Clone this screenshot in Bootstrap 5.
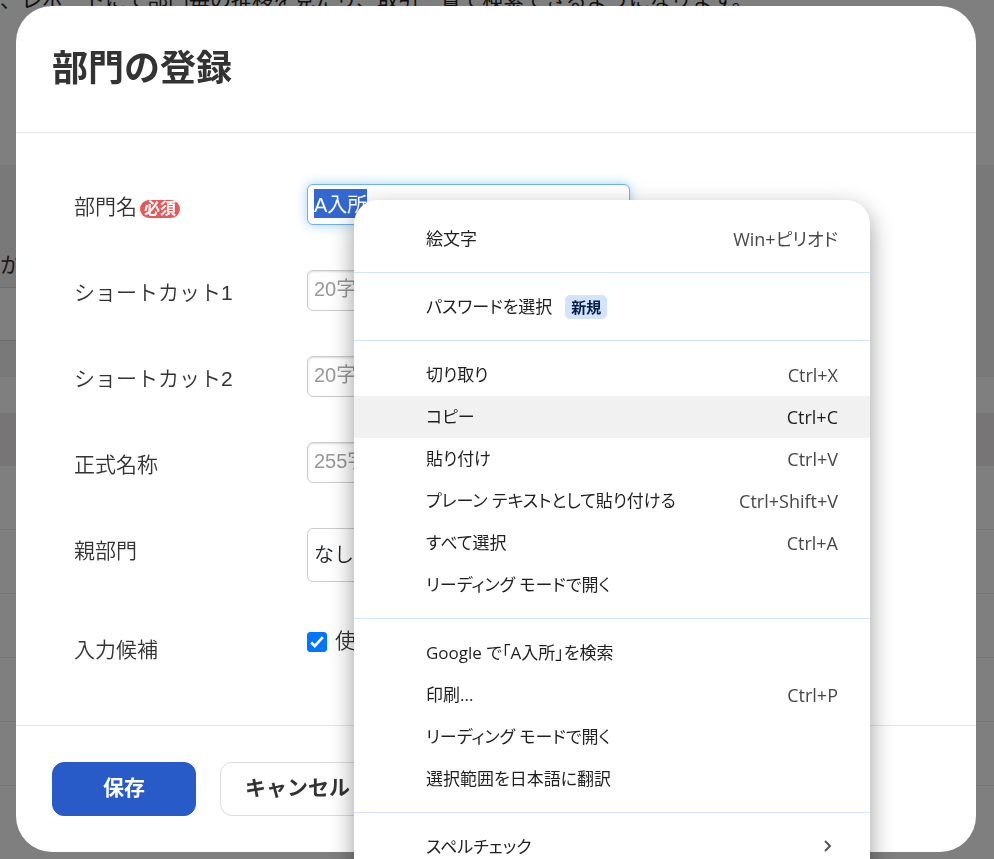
<!DOCTYPE html>
<html lang="ja">
<head>
<meta charset="utf-8">
<meta name="viewport" content="width=device-width, initial-scale=1">
<title>部門の登録</title>
<link href="https://cdn.jsdelivr.net/npm/bootstrap@5.3.0/dist/css/bootstrap.min.css" rel="stylesheet">
<style>
  body { font-family: "Liberation Sans", "Noto Sans CJK JP", sans-serif; font-size: 21px; line-height: 32px; color: #333; }
  .page-intro { height: 165px; }
  .page-intro p { margin: -16px 0 0; line-height: 32px; color: #222; }
  .list-line { height: 64px; border-bottom: 1px solid #eaeaea; }
  .list-head { height: 123px; background: #f2f2f2; border-bottom: 1px solid #dadada; padding-top: 84px; }
  .list-filter { height: 53px; border-bottom: 1px solid #dadada; }
  .list-band { height: 36px; background: #f2f2f2; }
  .list-gap { height: 36px; }
  .list-accent { height: 53px; background: #f1eaec; }
  .list-side { width: 18px; height: 212px; background: #f2f2f2; }
  .entry-dialog { max-width: none; margin: 6px 18px 7px 16px; }
  .entry-dialog .modal-content { border: 0; border-radius: 36px; color: #333; }
  .entry-dialog .modal-header { height: 127px; padding: 0 36px; border-color: #e5e5e5; }
  .entry-dialog .modal-title { font-size: 36px; line-height: 44px; font-weight: 700; }
  .entry-dialog .modal-body { padding: 51px 58px 52px; }
  .entry-dialog .modal-footer { padding: 36px; gap: 24px; border-color: #e5e5e5; }
  .entry-form { gap: 45px; }
  .entry-label { flex: 0 0 233px; font-weight: 350; line-height: 46px; margin: 0; }
  .entry-row { height: 41px; }
  .entry-row .entry-label { padding-top: 4px; }
  .entry-row-tall { height: 54px; }
  .required-tag { font-size: 16px; line-height: 18px; padding: 0 4px; margin-left: 3px; border-radius: 9px; background: #e85858; color: #fff; font-weight: 700; vertical-align: 0; }
  .entry-field { width: 323px; height: 41px; padding: 0 6px 3px; font-size: 20px; border: 1px solid #ccc; border-radius: 6px; box-shadow: inset 0 1px 2px #0002; color: #333; }
  .entry-field::placeholder { color: #999; }
  .entry-field:focus { border-color: #6db3ee; box-shadow: 0 0 12px #78bef0b0; }
  .entry-field::selection { background: rgba(51, 103, 209, .996); color: #fff; }
  .entry-select { width: 323px; height: 54px; padding: 0 6px; font-size: 20px; font-weight: 350; border: 1px solid #ccc; border-radius: 6px; background-color: #fff; }
  .entry-check { width: 20px; height: 20px; margin: 0; }
  .entry-check[type=checkbox] { border-radius: 3px; }
  .entry-check:checked { background-color: #0075ff; border-color: #0075ff; background-image: url("data:image/svg+xml,%3csvg xmlns='http://www.w3.org/2000/svg' viewBox='0 0 20 20'%3e%3cpath fill='none' stroke='%23fff' stroke-width='3' d='M3.5 10.5l4 4 9-10'/%3e%3c/svg%3e") !important; }
  .entry-check-label { font-weight: 350; line-height: 28px; padding-bottom: 2px; }
  .suggest-box { padding-bottom: 16px; }
  .entry-btn { height: 54px; font-size: 21px; font-weight: 700; border-radius: 12px; padding: 0 24px 3px; }
  .entry-save { width: 144px; --bs-btn-bg: #285ac8; --bs-btn-border-color: #285ac8; --bs-btn-color: #fff; }
  .entry-cancel { --bs-btn-bg: #fff; --bs-btn-border-color: #dcdcdc; --bs-btn-color: #333; }
  .context-menu { top: 200px; left: 354px; width: 516px; height: 700px; z-index: 1060; padding-top: 18px; background: #fff; border-radius: 24px; box-shadow: 0 9px 24px #0006; font-family: "Open Sans", "Noto Sans CJK JP", sans-serif; font-size: 17px; }
  .menu-entry { height: 42px; width: 100%; padding: 0 32px 0 72px; border: 0; background: none; color: #1f1f1f; font-feature-settings: "palt"; }
  .menu-entry.current { background: #f1f1f1; }
  .menu-keys { color: #474747; font-size: 18px; }
  .current .menu-keys { color: #1f1f1f; }
  .menu-line { height: 1px; margin: 12px 0 13px; background: #d3e3fd; }
  .new-tag { width: 42px; height: 24px; margin-left: 13px; border-radius: 5px; background: #d3e3fd; color: #041e49; font-size: 15px; line-height: 24px; font-weight: 700; text-align: center; }
</style>
</head>
<body class="vh-100 overflow-hidden">
<main class="position-relative">
  <div class="page-intro text-nowrap overflow-hidden"><p>、レポートにて部門毎の推移を見たり、取引一覧で検索できるようになります。</p></div>
  <div class="d-flex">
    <div class="flex-grow-1">
      <div class="list-head">か</div>
      <div class="list-filter"></div>
      <div class="list-band"></div>
    </div>
    <div class="list-side"></div>
  </div>
  <div class="list-gap"></div>
  <div class="list-accent"></div>
  <div class="list-line"></div>
  <div class="list-line"></div>
  <div class="list-line"></div>
  <div class="list-line"></div>
  <div class="list-line"></div>
</main>
<div class="modal-backdrop show"></div>
<div class="modal d-block overflow-hidden" role="dialog" aria-labelledby="dialogTitle">
  <div class="modal-dialog entry-dialog">
    <div class="modal-content">
      <div class="modal-header"><h1 class="modal-title" id="dialogTitle">部門の登録</h1></div>
      <form class="modal-body entry-form d-flex flex-column" id="entryForm">
        <div class="entry-row d-flex align-items-center">
          <label class="entry-label" for="deptName">部門名<span class="required-tag d-inline-block">必須</span></label>
          <input class="entry-field form-control" id="deptName" type="text" value="A入所" autofocus>
        </div>
        <div class="entry-row d-flex align-items-center">
          <label class="entry-label" for="short1">ショートカット1</label>
          <input class="entry-field form-control" id="short1" type="text" placeholder="20字以内">
        </div>
        <div class="entry-row d-flex align-items-center">
          <label class="entry-label" for="short2">ショートカット2</label>
          <input class="entry-field form-control" id="short2" type="text" placeholder="20字以内">
        </div>
        <div class="entry-row d-flex align-items-center">
          <label class="entry-label" for="fullName">正式名称</label>
          <input class="entry-field form-control" id="fullName" type="text" placeholder="255字以内">
        </div>
        <div class="entry-row-tall d-flex align-items-start">
          <label class="entry-label" for="parentDept">親部門</label>
          <select class="entry-select form-select" id="parentDept"><option>なし</option></select>
        </div>
        <div class="d-flex align-items-center">
          <span class="entry-label">入力候補</span>
          <div class="suggest-box d-flex align-items-center gap-2">
            <input class="entry-check form-check-input" id="suggest" type="checkbox" checked>
            <label class="entry-check-label" for="suggest">使用する</label>
          </div>
        </div>
      </form>
      <div class="modal-footer justify-content-start">
        <button class="btn entry-btn entry-save m-0" type="submit" form="entryForm">保存</button>
        <button class="btn entry-btn entry-cancel m-0" type="button">キャンセル</button>
      </div>
    </div>
  </div>
</div>
<div class="context-menu position-fixed" role="menu">
  <button class="menu-entry d-flex align-items-center justify-content-between" type="button" role="menuitem"><span>絵文字</span><span class="menu-keys">Win+ピリオド</span></button>
  <div class="menu-line"></div>
  <button class="menu-entry d-flex align-items-center" type="button" role="menuitem"><span>パスワードを選択</span><span class="new-tag">新規</span></button>
  <div class="menu-line"></div>
  <button class="menu-entry d-flex align-items-center justify-content-between" type="button" role="menuitem"><span>切り取り</span><span class="menu-keys">Ctrl+X</span></button>
  <button class="menu-entry current d-flex align-items-center justify-content-between" type="button" role="menuitem"><span>コピー</span><span class="menu-keys">Ctrl+C</span></button>
  <button class="menu-entry d-flex align-items-center justify-content-between" type="button" role="menuitem"><span>貼り付け</span><span class="menu-keys">Ctrl+V</span></button>
  <button class="menu-entry d-flex align-items-center justify-content-between" type="button" role="menuitem"><span>プレーン テキストとして貼り付ける</span><span class="menu-keys">Ctrl+Shift+V</span></button>
  <button class="menu-entry d-flex align-items-center justify-content-between" type="button" role="menuitem"><span>すべて選択</span><span class="menu-keys">Ctrl+A</span></button>
  <button class="menu-entry d-flex align-items-center" type="button" role="menuitem">リーディング モードで開く</button>
  <div class="menu-line"></div>
  <button class="menu-entry d-flex align-items-center" type="button" role="menuitem">Google で「A入所」を検索</button>
  <button class="menu-entry d-flex align-items-center justify-content-between" type="button" role="menuitem"><span>印刷...</span><span class="menu-keys">Ctrl+P</span></button>
  <button class="menu-entry d-flex align-items-center" type="button" role="menuitem">リーディング モードで開く</button>
  <button class="menu-entry d-flex align-items-center" type="button" role="menuitem">選択範囲を日本語に翻訳</button>
  <div class="menu-line"></div>
  <button class="menu-entry d-flex align-items-center justify-content-between" type="button" role="menuitem"><span>スペルチェック</span>
    <svg width="20" height="20" viewBox="0 0 20 20" fill="none" stroke="#555" stroke-width="2" aria-hidden="true"><path d="M7 4l5 5-5 5"/></svg></button>
</div>
<script src="https://cdn.jsdelivr.net/npm/bootstrap@5.3.0/dist/js/bootstrap.bundle.min.js"></script>
<script>
  const nameField = document.getElementById('deptName');
  nameField.focus();
  nameField.select();
</script>
</body>
</html>
